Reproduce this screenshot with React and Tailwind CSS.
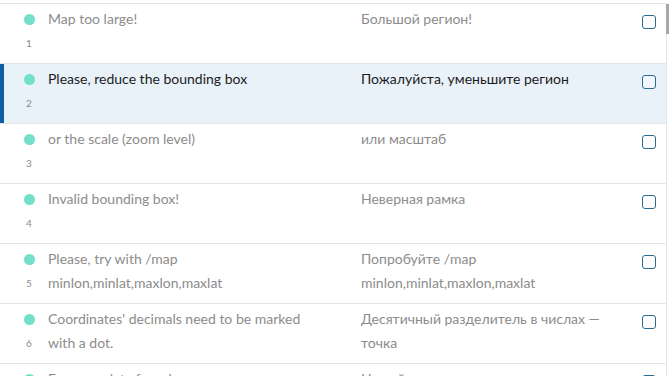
import React from "react";

const rows = [
  { n: 1, en: "Map too large!", ru: "Большой регион!" },
  { n: 2, en: "Please, reduce the bounding box", ru: "Пожалуйста, уменьшите регион", active: true },
  { n: 3, en: "or the scale (zoom level)", ru: "или масштаб" },
  { n: 4, en: "Invalid bounding box!", ru: "Неверная рамка" },
  { n: 5, en: "Please, try with /map minlon,minlat,maxlon,maxlat", ru: "Попробуйте /map minlon,minlat,maxlon,maxlat" },
  { n: 6, en: "Coordinates' decimals need to be marked with a dot.", ru: "Десятичный разделитель в числах — точка" },
  { n: 7, en: "Error: no data found", ru: "Не найдено данных" },
];

function Row({ r }) {
  return (
    <div
      className={
        "relative flex min-h-[60px] border-t border-[#e4e4e4] pt-[3px] " +
        (r.active ? "bg-[#e9f1f9]" : "bg-white")
      }
    >
      {r.active && <div className="absolute left-0 top-0 bottom-0 w-[4px] bg-[#0f5ea4]" />}
      <div className="flex w-[48px] shrink-0 flex-col items-center pl-[10px]">
        <div className="flex h-[24px] items-center">
          <div className="h-[11px] w-[11px] rounded-full bg-[#72e0ca]" />
        </div>
        <div className="flex h-[24px] items-center text-[10px] text-[#8a8a8a]">{r.n}</div>
      </div>
      <div
        className={
          "w-[270px] shrink-0 text-[14px] leading-[24px] " +
          (r.active ? "text-[#1b1b1b]" : "text-[#8c8c8c]")
        }
      >
        {r.en}
      </div>
      <div
        className={
          "ml-[43px] w-[262px] shrink-0 text-[14px] leading-[24px] " +
          (r.active ? "text-[#1b1b1b]" : "text-[#8c8c8c]")
        }
      >
        {r.ru}
      </div>
      <div className="ml-[19px] pt-[8px]">
        <div className="h-[14px] w-[14px] rounded-[3px] border-[1.5px] border-[#2d6a90] bg-white/40" />
      </div>
    </div>
  );
}

export default function App() {
  return (
    <div
      className="relative h-[376px] w-[669px] overflow-hidden bg-white pt-[3px]"
      style={{ fontFamily: "Lato, 'Open Sans', sans-serif" }}
    >
      <div className="w-[667px] border-r border-[#e4e4e4]">
        {rows.map((r) => (
          <Row key={r.n} r={r} />
        ))}
      </div>
      <div className="absolute right-0 top-[4px] h-[30px] w-[3px] bg-[#a8a8a8]" />
    </div>
  );
}
